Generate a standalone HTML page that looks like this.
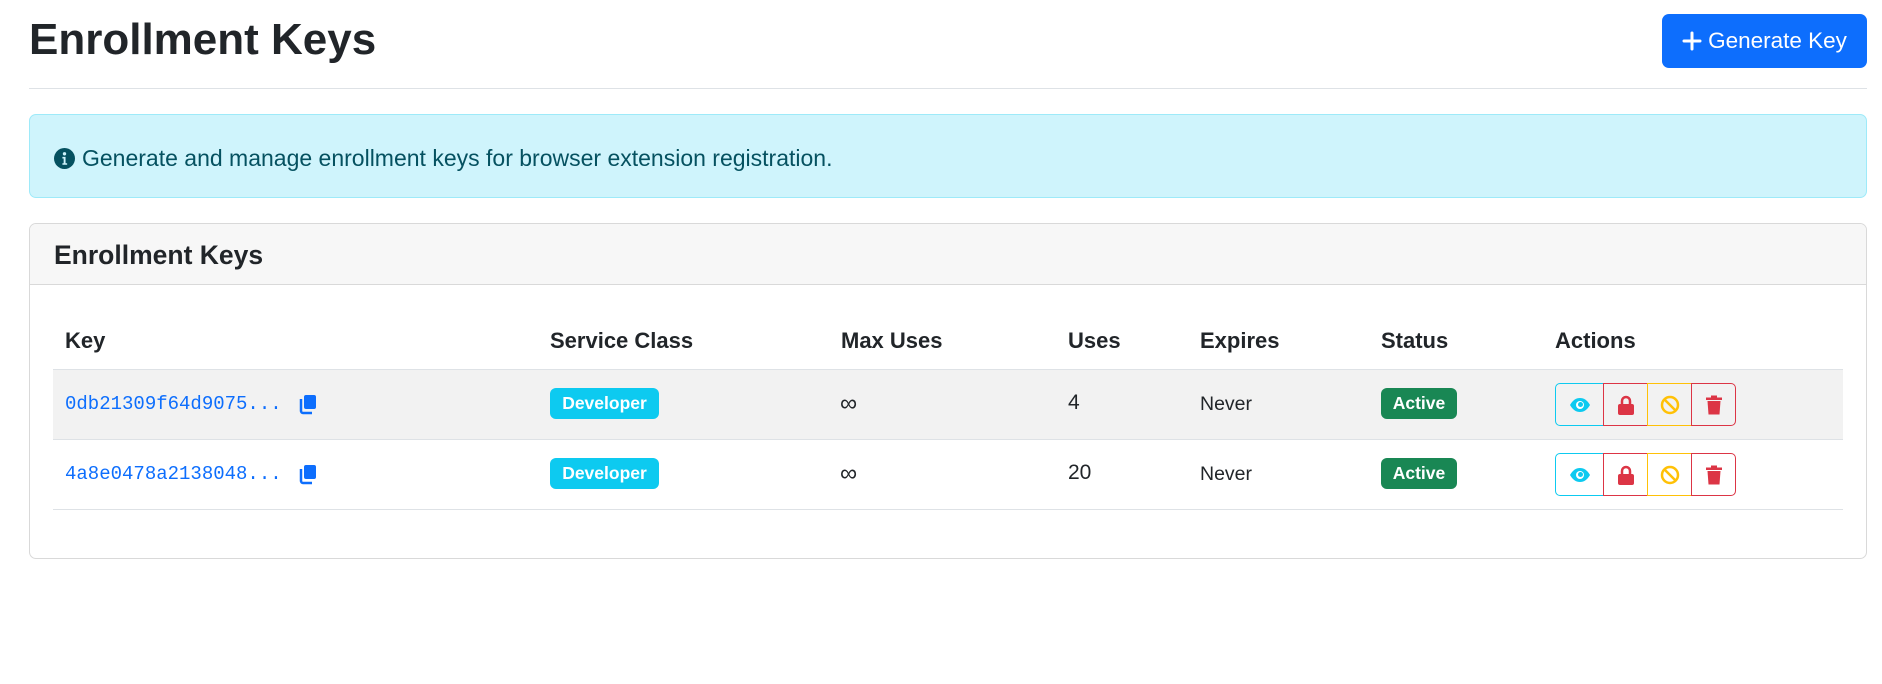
<!DOCTYPE html>
<html><head><meta charset="utf-8"><style>
*{box-sizing:border-box;margin:0;padding:0}
body{width:1882px;height:684px;background:#fff;font-family:"Liberation Sans",sans-serif;color:#212529;position:relative;overflow:hidden}
.a{position:absolute}
h1{position:absolute;left:29px;top:12px;font-size:44px;font-weight:bold;line-height:56px;color:#212529}
.hr{left:29px;width:1838px;top:88px;height:1px;background:#dee2e6}
.btn{left:1662px;top:14px;width:205px;height:54px;background:#0d6efd;border-radius:7px;color:#fff;font-size:22.5px;display:flex;align-items:center;justify-content:center;gap:6px}
.alert{left:29px;top:114px;width:1838px;height:84px;background:#cff4fc;border:1px solid #9eeaf9;border-radius:7px;color:#055160;font-size:23px;display:flex;align-items:center;padding-left:24px;gap:7px;padding-top:4px}
.card{left:29px;top:223px;width:1838px;height:336px;border:1px solid #d9d9d9;border-radius:7px;overflow:hidden}
.ch{height:61px;background:#f7f7f7;border-bottom:1px solid #d9d9d9;font-size:26.5px;font-weight:bold;padding-left:24px;line-height:62px}
.th{font-weight:bold;font-size:22px;top:328px}
.row{left:53px;width:1790px;height:70px;border-bottom:1px solid #dee2e6}
.td{font-size:19.5px}
.mono{font-family:"Liberation Mono",monospace;color:#0d6efd;font-size:19px}
.badge{height:31px;border-radius:6px;color:#fff;font-weight:bold;font-size:17.5px;display:flex;align-items:center;justify-content:center}
.grp{display:flex;height:43px}
.grp div{height:43px;border:1px solid;display:flex;align-items:center;justify-content:center;margin-left:-1px;background:transparent}
</style></head><body>
<h1>Enrollment Keys</h1>
<div class="a hr"></div>
<div class="a btn"><svg width="20" height="20" viewBox="0 0 20 20"><path d="M10 2v16M2 10h16" stroke="#fff" stroke-width="3" stroke-linecap="round"/></svg>Generate Key</div>
<div class="a alert"><svg width="21" height="21" viewBox="0 0 20 20"><circle cx="10" cy="10" r="10" fill="#055160"/><circle cx="10" cy="5.5" r="1.6" fill="#cff4fc"/><path d="M8 8.5h3v6h1.5v1.5h-4.5v-1.5h1.2v-4.5h-1.2z" fill="#cff4fc"/></svg>Generate and manage enrollment keys for browser extension registration.</div>
<div class="a card"><div class="ch">Enrollment Keys</div></div>
<div class="a" style="left:53px;top:369px;width:1790px;height:1px;background:#dee2e6"></div>
<div class="a row" style="top:370px;background:#f2f2f2"></div>
<div class="a row" style="top:440px"></div>
<div class="a th" style="left:65px">Key</div>
<div class="a th" style="left:550px">Service Class</div>
<div class="a th" style="left:841px">Max Uses</div>
<div class="a th" style="left:1068px">Uses</div>
<div class="a th" style="left:1200px">Expires</div>
<div class="a th" style="left:1381px">Status</div>
<div class="a th" style="left:1555px">Actions</div>

<div class="a mono" style="left:65px;top:393px">0db21309f64d9075...</div>
<div class="a mono" style="left:65px;top:463px">4a8e0478a2138048...</div>
<svg class="a" style="left:297px;top:393px" width="22" height="22" viewBox="0 0 22 22"><rect x="7" y="2" width="12" height="14" rx="2" fill="#0d6efd"/><path d="M4 6v12a2 2 0 0 0 2 2h9" stroke="#0d6efd" stroke-width="2.5" fill="none"/></svg>
<svg class="a" style="left:297px;top:463px" width="22" height="22" viewBox="0 0 22 22"><rect x="7" y="2" width="12" height="14" rx="2" fill="#0d6efd"/><path d="M4 6v12a2 2 0 0 0 2 2h9" stroke="#0d6efd" stroke-width="2.5" fill="none"/></svg>

<div class="a badge" style="left:550px;top:388px;width:109px;background:#0dcaf0">Developer</div>
<div class="a badge" style="left:550px;top:458px;width:109px;background:#0dcaf0">Developer</div>
<div class="a td" style="left:840px;top:390px;font-size:24px">∞</div>
<div class="a td" style="left:840px;top:460px;font-size:24px">∞</div>
<div class="a td" style="left:1068px;top:391px;font-size:21px">4</div>
<div class="a td" style="left:1068px;top:461px;font-size:21px">20</div>
<div class="a td" style="left:1200px;top:393px">Never</div>
<div class="a td" style="left:1200px;top:463px">Never</div>
<div class="a badge" style="left:1381px;top:388px;width:76px;background:#198754">Active</div>
<div class="a badge" style="left:1381px;top:458px;width:76px;background:#198754">Active</div>

<div class="a grp" style="left:1555px;top:383px">
<div style="width:49px;border-color:#0dcaf0;border-radius:5px 0 0 5px;margin-left:0"><svg width="22" height="16" viewBox="0 0 22 16"><path d="M1 8C4 3 7 1 11 1s7 2 10 7c-3 5-6 7-10 7S4 13 1 8z" fill="#0dcaf0"/><circle cx="11" cy="8" r="4" fill="#fff"/><circle cx="11.5" cy="7.5" r="2.5" fill="#0dcaf0"/></svg></div>
<div style="width:45px;border-color:#dc3545"><svg width="18" height="20" viewBox="0 0 18 20"><path d="M5 9V6a4 4 0 0 1 8 0v3" stroke="#dc3545" stroke-width="2.5" fill="none"/><rect x="1" y="9" width="16" height="11" rx="2" fill="#dc3545"/></svg></div>
<div style="width:45px;border-color:#ffc107"><svg width="20" height="20" viewBox="0 0 20 20"><circle cx="10" cy="10" r="8" stroke="#ffc107" stroke-width="2.5" fill="none"/><path d="M4.5 4.5l11 11" stroke="#ffc107" stroke-width="2.5"/></svg></div>
<div style="width:45px;border-color:#dc3545;border-radius:0 5px 5px 0"><svg width="18" height="20" viewBox="0 0 18 20"><rect x="1" y="2.5" width="16" height="2.5" fill="#dc3545"/><rect x="6" y="0.5" width="6" height="2.5" fill="#dc3545"/><path d="M2.5 6h13l-1 13.5h-11z" fill="#dc3545"/></svg></div>
</div>
<div class="a grp" style="left:1555px;top:453px">
<div style="width:49px;border-color:#0dcaf0;border-radius:5px 0 0 5px;margin-left:0"><svg width="22" height="16" viewBox="0 0 22 16"><path d="M1 8C4 3 7 1 11 1s7 2 10 7c-3 5-6 7-10 7S4 13 1 8z" fill="#0dcaf0"/><circle cx="11" cy="8" r="4" fill="#fff"/><circle cx="11.5" cy="7.5" r="2.5" fill="#0dcaf0"/></svg></div>
<div style="width:45px;border-color:#dc3545"><svg width="18" height="20" viewBox="0 0 18 20"><path d="M5 9V6a4 4 0 0 1 8 0v3" stroke="#dc3545" stroke-width="2.5" fill="none"/><rect x="1" y="9" width="16" height="11" rx="2" fill="#dc3545"/></svg></div>
<div style="width:45px;border-color:#ffc107"><svg width="20" height="20" viewBox="0 0 20 20"><circle cx="10" cy="10" r="8" stroke="#ffc107" stroke-width="2.5" fill="none"/><path d="M4.5 4.5l11 11" stroke="#ffc107" stroke-width="2.5"/></svg></div>
<div style="width:45px;border-color:#dc3545;border-radius:0 5px 5px 0"><svg width="18" height="20" viewBox="0 0 18 20"><rect x="1" y="2.5" width="16" height="2.5" fill="#dc3545"/><rect x="6" y="0.5" width="6" height="2.5" fill="#dc3545"/><path d="M2.5 6h13l-1 13.5h-11z" fill="#dc3545"/></svg></div>
</div>
</body></html>
